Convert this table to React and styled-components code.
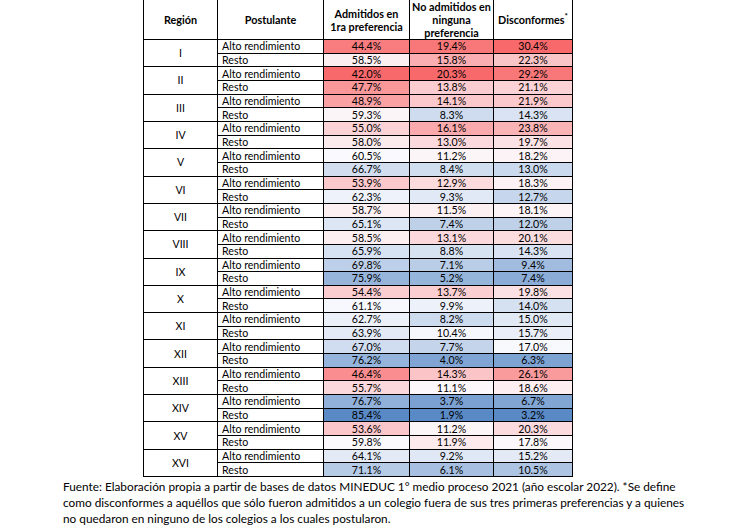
import styled, { createGlobalStyle } from "styled-components";
import { Fragment } from "react";

const GlobalStyle = createGlobalStyle`
  body {
    margin: 0;
    background: #fff;
    font-family: Lato, "Liberation Sans", sans-serif;
    color: #000;
  }
`;

const data = [
  ["I", [44.4, 19.4, 30.4], [58.5, 15.8, 22.3]],
  ["II", [42.0, 20.3, 29.2], [47.7, 13.8, 21.1]],
  ["III", [48.9, 14.1, 21.9], [59.3, 8.3, 14.3]],
  ["IV", [55.0, 16.1, 23.8], [58.0, 13.0, 19.7]],
  ["V", [60.5, 11.2, 18.2], [66.7, 8.4, 13.0]],
  ["VI", [53.9, 12.9, 18.3], [62.3, 9.3, 12.7]],
  ["VII", [58.7, 11.5, 18.1], [65.1, 7.4, 12.0]],
  ["VIII", [58.5, 13.1, 20.1], [65.9, 8.8, 14.3]],
  ["IX", [69.8, 7.1, 9.4], [75.9, 5.2, 7.4]],
  ["X", [54.4, 13.7, 19.8], [61.1, 9.9, 14.0]],
  ["XI", [62.7, 8.2, 15.0], [63.9, 10.4, 15.7]],
  ["XII", [67.0, 7.7, 17.0], [76.2, 4.0, 6.3]],
  ["XIII", [46.4, 14.3, 26.1], [55.7, 11.1, 18.6]],
  ["XIV", [76.7, 3.7, 6.7], [85.4, 1.9, 3.2]],
  ["XV", [53.6, 11.2, 20.3], [59.8, 11.9, 17.8]],
  ["XVI", [64.1, 9.2, 15.2], [71.1, 6.1, 10.5]],
];

const widths = [74, 106, 86, 84, 79];

const RED = [248, 105, 107];
const WHITE = [252, 252, 255];
const BLUE = [90, 138, 198];

// escala de 3 colores como en Excel (min, percentil 50, max)
const stats = [0, 1, 2].map((c) => {
  const vals = data.flatMap((r) => [r[1][c], r[2][c]]).sort((a, b) => a - b);
  const n = vals.length;
  return { min: vals[0], mid: (vals[n / 2 - 1] + vals[n / 2]) / 2, max: vals[n - 1] };
});

const mix = (a, b, t) => a.map((x, i) => Math.round(x + (b[i] - x) * t));

const colorFor = (v, c) => {
  const { min, mid, max } = stats[c];
  const lowColor = c === 0 ? RED : BLUE;
  const highColor = c === 0 ? BLUE : RED;
  const rgb = v <= mid
    ? mix(lowColor, WHITE, (v - min) / (mid - min))
    : mix(WHITE, highColor, (v - mid) / (max - mid));
  return `rgb(${rgb.join(",")})`;
};

const Page = styled.div`
  display: flex;
  flex-direction: column;
  padding-left: 63px;
`;

const Table = styled.table`
  border-collapse: collapse;
  margin-left: 80px;
  table-layout: fixed;
  width: 429px;
  font-size: 10.6px;
`;

const Th = styled.th`
  height: 38px;
  padding: 0;
  font-weight: 700;
  font-size: 10.8px;
  line-height: 13px;
  text-align: center;
  vertical-align: middle;
  border-left: 1px solid #000;
  border-right: 1px solid #000;
  border-bottom: 1px solid #000;
`;

const Row = styled.tr`
  height: 13.66px;
`;

const RegionCell = styled.td`
  text-align: center;
  vertical-align: middle;
  border: 1px solid #000;
  line-height: 12px;
  padding: 0;
`;

const NameCell = styled.td`
  text-align: left;
  padding: 0 0 0 4px;
  line-height: 12px;
  border: 1px solid #000;
  white-space: nowrap;
`;

const ValueCell = styled.td`
  text-align: center;
  padding: 0;
  line-height: 12px;
  border: 1px solid #000;
  background: ${(p) => p.$bg};
`;

const Sup = styled.sup`
  font-size: 8px;
  line-height: 0;
`;

const Caption = styled.p`
  margin: 2px 0 0;
  font-size: 11.8px;
  line-height: 16px;
  white-space: nowrap;
`;

const ValueRow = ({ label, vals, region }) => (
  <Row>
    {region && <RegionCell rowSpan={2}>{region}</RegionCell>}
    <NameCell>{label}</NameCell>
    {vals.map((v, c) => (
      <ValueCell key={c} $bg={colorFor(v, c)}>
        {v.toFixed(1)}%
      </ValueCell>
    ))}
  </Row>
);

const App = () => {
  return (
    <Page>
      <GlobalStyle />
      <Table>
        <colgroup>
          {widths.map((w, i) => (
            <col key={i} style={{ width: w }} />
          ))}
        </colgroup>
        <thead>
          <tr>
            <Th>Región</Th>
            <Th>Postulante</Th>
            <Th>Admitidos en<br />1ra preferencia</Th>
            <Th>No admitidos en<br />ninguna<br />preferencia</Th>
            <Th>Disconformes<Sup>*</Sup></Th>
          </tr>
        </thead>
        <tbody>
          {data.map(([region, alto, resto]) => (
            <Fragment key={region}>
              <ValueRow region={region} label="Alto rendimiento" vals={alto} />
              <ValueRow label="Resto" vals={resto} />
            </Fragment>
          ))}
        </tbody>
      </Table>
      <Caption>
        Fuente: Elaboración propia a partir de bases de datos MINEDUC 1° medio proceso 2021 (año escolar 2022). *Se define
        <br />
        como disconformes a aquéllos que sólo fueron admitidos a un colegio fuera de sus tres primeras preferencias y a quienes
        <br />
        no quedaron en ninguno de los colegios a los cuales postularon.
      </Caption>
    </Page>
  );
};

export default App;
